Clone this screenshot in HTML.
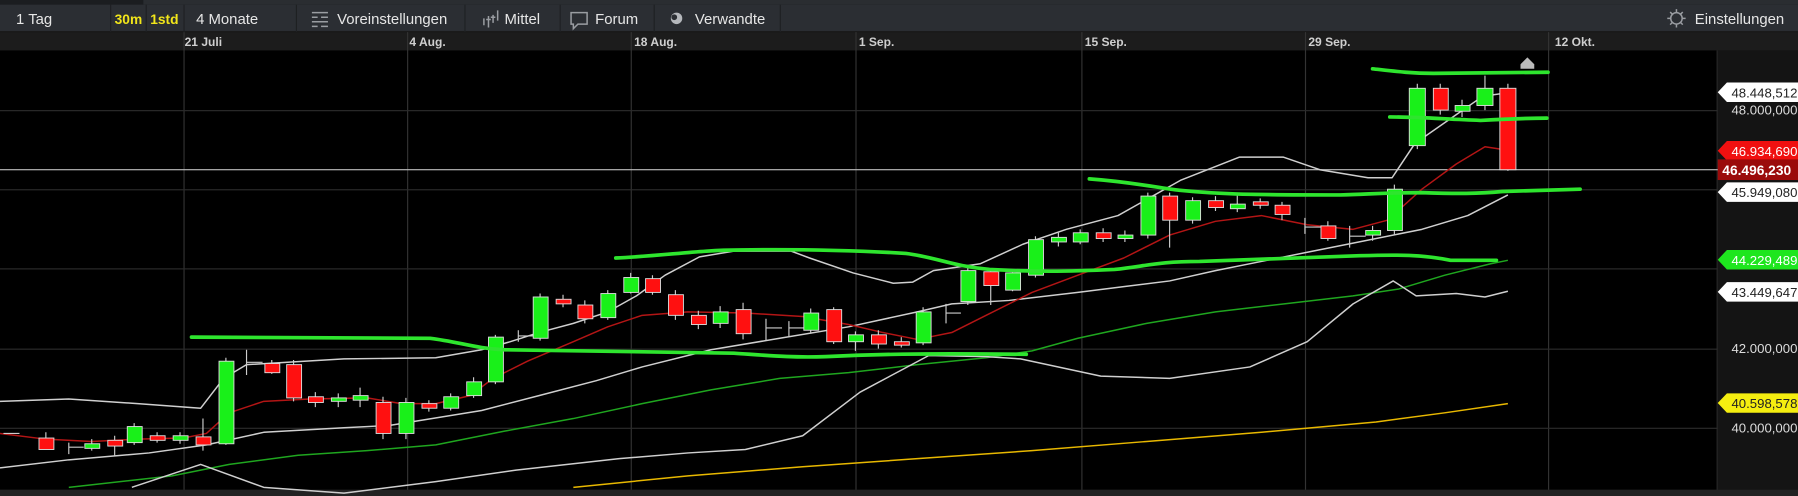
<!DOCTYPE html>
<html><head><meta charset="utf-8"><style>
html,body{margin:0;padding:0;background:#000;overflow:hidden}
svg{display:block}
text{font-family:"Liberation Sans",sans-serif}
</style></head><body>
<svg width="1798" height="496" viewBox="0 0 1568 432.55" preserveAspectRatio="none" xmlns="http://www.w3.org/2000/svg">
<rect x="0" y="0" width="1568" height="433" fill="#000"/>
<!-- top strip -->
<rect x="0" y="0" width="1568" height="4" fill="#2a2d31"/>
<rect x="0" y="0" width="125" height="4" fill="#1b1d20"/>
<!-- toolbar -->
<rect x="0" y="4" width="1568" height="24" fill="#2b2e33"/>
<rect x="0" y="27" width="1568" height="1" fill="#1a1a1a"/>
<g fill="#1e2023">
<rect x="96" y="4" width="1" height="24"/><rect x="127" y="4" width="1" height="24"/><rect x="160" y="4" width="1" height="24"/><rect x="258" y="4" width="1" height="24"/><rect x="405" y="4" width="1" height="24"/><rect x="488" y="4" width="1" height="24"/><rect x="570" y="4" width="1" height="24"/><rect x="680" y="4" width="1" height="24"/>
</g>
<g font-size="13" fill="#e6e6e6">
<text x="14" y="21">1 Tag</text>
<text x="100" y="21" fill="#f2e61a" font-size="12" font-weight="bold">30m</text>
<text x="131" y="21" fill="#f2e61a" font-size="12" font-weight="bold">1std</text>
<text x="171" y="21">4 Monate</text>
<text x="294" y="21">Voreinstellungen</text>
<text x="440" y="21">Mittel</text>
<text x="519" y="21">Forum</text>
<text x="606" y="21">Verwandte</text>
<text x="1478" y="21">Einstellungen</text>
</g>
<!-- icons -->
<g stroke="#9a9da2" stroke-width="1.3" fill="none">
<path d="M272 11h14M272 15h5M280 15h6M272 19h14M272 23h5M280 23h6"/>
<path d="M422 22v-6M426 24v-10M430 20v-7M434 18v-9M424 17h4M428 15h4" />
<path d="M498 11h14v10h-8l-4 4v-4h-2z"/>
<circle cx="1462" cy="16" r="5"/>
<path d="M1462 8v3M1462 21v3M1454 16h3M1467 16h3M1456.5 10.5l2 2M1465.5 19.5l2 2M1456.5 21.5l2-2M1465.5 12.5l2-2"/>
</g>
<circle cx="590" cy="16" r="5" fill="#b5b8bc"/><circle cx="588" cy="15" r="2.5" fill="#2b2e33"/>
<!-- date axis -->
<rect x="0" y="28" width="1568" height="16" fill="#1c1c1c"/>
<g font-size="10.5" fill="#cfcfcf" font-weight="bold">
<text x="161" y="40">21 Juli</text><text x="357" y="40">4 Aug.</text><text x="553" y="40">18 Aug.</text><text x="749" y="40">1 Sep.</text><text x="946" y="40">15 Sep.</text><text x="1141" y="40">29 Sep.</text><text x="1356" y="40">12 Okt.</text>
</g>
<g fill="#333"><rect x="160" y="28" width="1" height="405"/><rect x="355" y="28" width="1" height="405"/><rect x="550" y="28" width="1" height="405"/><rect x="746" y="28" width="1" height="405"/><rect x="943" y="28" width="1" height="405"/><rect x="1138" y="28" width="1" height="405"/><rect x="1350" y="28" width="1" height="405"/></g>
<!-- right axis -->
<rect x="1498" y="44" width="70" height="389" fill="#141414"/>
<rect x="1497" y="44" width="1" height="389" fill="#2a2a2a"/>
<g fill="#2c2c2c"><rect x="0" y="96" width="1498" height="1"/><rect x="0" y="165" width="1498" height="1"/><rect x="0" y="234" width="1498" height="1"/><rect x="0" y="304" width="1498" height="1"/><rect x="0" y="373" width="1498" height="1"/></g>
<rect x="0" y="427" width="1568" height="6" fill="#222"/>
<!-- home icon -->
<path d="M1326 56l6-6 6 6v4h-12z" fill="#bbb"/>
<!-- current price line -->
<rect x="0" y="147.5" width="1500" height="1" fill="#bdbdbd"/>
<!-- thin lines -->
<g fill="none" stroke-width="1.3" stroke-linejoin="round">
<polyline stroke="#e8b800" points="500,425 600,415 700,407 800,400 900,393 1000,385 1100,377 1200,368 1260,360 1315,352"/>
<polyline stroke="#1fa61f" points="60,425 150,415 200,405 260,397 320,393 380,388 440,376 500,365 560,352 620,340 680,330 740,325 800,318 860,312 900,306 940,295 1000,282 1060,272 1120,265 1180,258 1220,252 1260,240 1300,230 1315,227"/>
<polyline stroke="#cfcfcf" points="115,425 175,405 230,425 300,430 380,420 450,410 540,400 600,395 650,392 700,380 750,342 810,310 860,311 890,313 960,328 1020,330 1090,320 1140,298 1180,265 1215,245 1235,258 1270,256 1295,259 1315,254"/>
<polyline stroke="#cfcfcf" points="0,408 60,401 130,395 180,388 230,377 300,373 340,371 420,358 470,345 520,332 560,320 620,305 680,295 740,285 800,272 830,265 880,262 940,255 980,250 1020,245 1060,236 1100,228 1140,220 1180,212 1240,200 1280,188 1315,170"/>
<polyline stroke="#cfcfcf" points="0,350 60,348 120,352 175,356 195,330 215,318 300,313 380,312 420,305 445,298 470,290 500,282 530,272 555,258 580,240 610,224 640,219 690,219 706,225 744,238 779,247 796,246 814,236 855,230 892,213 930,200 975,188 1030,157 1081,137 1119,137 1151,148 1193,155 1214,155 1234,125 1270,100 1293,84 1314,81"/>
<polyline stroke="#b31515" points="0,378 40,383 80,385 120,383 160,382 180,378 200,360 230,350 270,348 320,347 350,352 380,352 410,345 430,330 460,315 500,298 530,285 560,275 600,272 650,273 700,276 740,283 770,290 800,296 830,290 860,275 900,255 940,240 980,225 1020,205 1060,193 1100,188 1140,196 1180,200 1210,192 1240,165 1270,143 1295,128 1315,131"/>
</g>
<!-- candles -->
<g stroke="#ccc" stroke-width="1">
<path d="M10 378v0M40 377v15M60 386v10M80 383v10M100 380v18M117 369v19M137 377v9M157 377v10M177 365v28M197 312v76M215 305v22M237 314v12M256 314v36M275 342v13M295 343v12M314 338v17M334 346v37M354 347v36M374 349v10M393 343v15M413 329v18M432 292v43M452 288v10M471 256v41M491 257v11M510 262v20M530 253v26M550 238v18M569 240v17M589 253v26M609 271v16M628 267v19M648 264v32M668 278v19M688 280v13M707 269v22M727 268v32M746 289v17M766 288v16M786 294v9M805 268v33M825 265v17M844 231v35M864 234v32M883 236v18M903 206v36M923 203v12M942 200v13M962 199v12M981 201v10M1001 168v40M1020 168v48M1040 172v23M1060 171v13M1079 170v15M1099 173v9M1118 176v16M1138 190v14M1158 193v17M1177 197v19M1197 197v13M1216 161v44M1236 73v57M1256 73v27M1275 87v15M1295 66v30M1315 73v76"/>
<path d="M3 378h14M60 390h13M215 316h14M452 293h14M668 286h14M688 286h14M825 273h13M1138 198h14M1177 206h14"/>
</g>
<g stroke="#ddd" stroke-width="0.8">
<g fill="#ff1010">
<rect x="34" y="382" width="13" height="10"/><rect x="94" y="384" width="13" height="5"/><rect x="131" y="380" width="13" height="4"/><rect x="171" y="381" width="13" height="7"/><rect x="231" y="317" width="13" height="8"/><rect x="250" y="318" width="13" height="29"/><rect x="269" y="346" width="13" height="5"/><rect x="328" y="351" width="13" height="27"/><rect x="368" y="352" width="13" height="4"/><rect x="485" y="261" width="13" height="4"/><rect x="504" y="266" width="13" height="12"/><rect x="563" y="243" width="13" height="12"/><rect x="583" y="257" width="13" height="18"/><rect x="603" y="275" width="13" height="8"/><rect x="642" y="270" width="13" height="21"/><rect x="721" y="270" width="13" height="28"/><rect x="760" y="292" width="13" height="8"/><rect x="780" y="298" width="13" height="3"/><rect x="858" y="237" width="13" height="12"/><rect x="956" y="203" width="13" height="5"/><rect x="1014" y="171" width="13" height="21"/><rect x="1054" y="175" width="13" height="6"/><rect x="1093" y="176" width="13" height="3"/><rect x="1112" y="179" width="13" height="8"/><rect x="1152" y="197" width="13" height="11"/><rect x="1250" y="77" width="13" height="19"/><rect x="1308" y="77" width="14" height="71"/>
</g>
<g fill="#19f019">
<rect x="74" y="387" width="13" height="4"/><rect x="111" y="372" width="13" height="14"/><rect x="151" y="380" width="13" height="4"/><rect x="191" y="315" width="13" height="72"/><rect x="289" y="347" width="13" height="3"/><rect x="308" y="345" width="13" height="4"/><rect x="348" y="351" width="13" height="27"/><rect x="387" y="346" width="13" height="10"/><rect x="407" y="333" width="13" height="12"/><rect x="426" y="294" width="13" height="39"/><rect x="465" y="259" width="13" height="36"/><rect x="524" y="256" width="13" height="21"/><rect x="544" y="242" width="13" height="13"/><rect x="622" y="272" width="13" height="10"/><rect x="701" y="273" width="13" height="15"/><rect x="740" y="292" width="13" height="6"/><rect x="799" y="272" width="13" height="27"/><rect x="838" y="236" width="13" height="27"/><rect x="877" y="238" width="13" height="15"/><rect x="897" y="209" width="13" height="31"/><rect x="917" y="207" width="13" height="4"/><rect x="936" y="203" width="13" height="8"/><rect x="975" y="205" width="13" height="3"/><rect x="995" y="171" width="13" height="34"/><rect x="1034" y="175" width="13" height="17"/><rect x="1073" y="178" width="13" height="4"/><rect x="1191" y="201" width="13" height="4"/><rect x="1210" y="165" width="13" height="36"/><rect x="1229" y="77" width="14" height="50"/><rect x="1269" y="92" width="13" height="5"/><rect x="1288" y="77" width="14" height="15"/>
</g>
</g>
<!-- thick green drawn lines -->
<g fill="none" stroke="#2ee52e" stroke-width="3.2" stroke-linecap="round" stroke-linejoin="round">
<path d="M167 294 L375 295 C400 298 415 304 440 305 L640 308 C670 310 690 312 720 311 C760 309 800 308 895 309"/>
<path d="M537 225 C580 223 610 218 645 218 C700 217 760 219 790 221 C815 224 830 232 863 235 C900 237 930 237 972 235 C1000 232 1010 228 1046 228 L1186 223 C1220 222 1240 222 1265 227 L1305 227"/>
<path d="M950 156 C990 159 1010 164 1029 166 C1060 169 1080 170 1169 170 C1200 169 1210 168 1240 168 C1270 169 1290 169 1310 167 L1378 165"/>
<path d="M1197 60 C1215 62 1230 64 1250 64 L1350 63"/>
<path d="M1212 102 C1240 102 1260 104 1291 105 C1310 104 1330 103 1349 103"/>
</g>
<!-- price labels -->
<g font-size="11.5">
<path d="M1506 72h62v17h-62l-8-8.5z" fill="#fff"/><text x="1510" y="85" fill="#222">48.448,512</text>
<text x="1510" y="100" fill="#ddd">48.000,000</text>
<path d="M1506 123h62v17h-62l-8-8.5z" fill="#f01010"/><text x="1510" y="136" fill="#fff">46.934,690</text>
<rect x="1498" y="139" width="70" height="18" fill="#9b0b0b"/><text x="1502" y="152.5" fill="#fff" font-weight="bold" font-size="12">46.496,230</text>
<path d="M1506 159h62v17h-62l-8-8.5z" fill="#fff"/><text x="1510" y="172" fill="#222">45.949,080</text>
<path d="M1506 218h62v17h-62l-8-8.5z" fill="#1ee61e"/><text x="1510" y="231" fill="#fff">44.229,489</text>
<path d="M1506 246h62v17h-62l-8-8.5z" fill="#fff"/><text x="1510" y="259" fill="#222">43.449,647</text>
<text x="1510" y="308" fill="#ddd">42.000,000</text>
<path d="M1506 343h62v17h-62l-8-8.5z" fill="#f5ee10"/><text x="1510" y="356" fill="#222">40.598,578</text>
<text x="1510" y="377" fill="#ddd">40.000,000</text>
</g>
</svg>
</body></html>
